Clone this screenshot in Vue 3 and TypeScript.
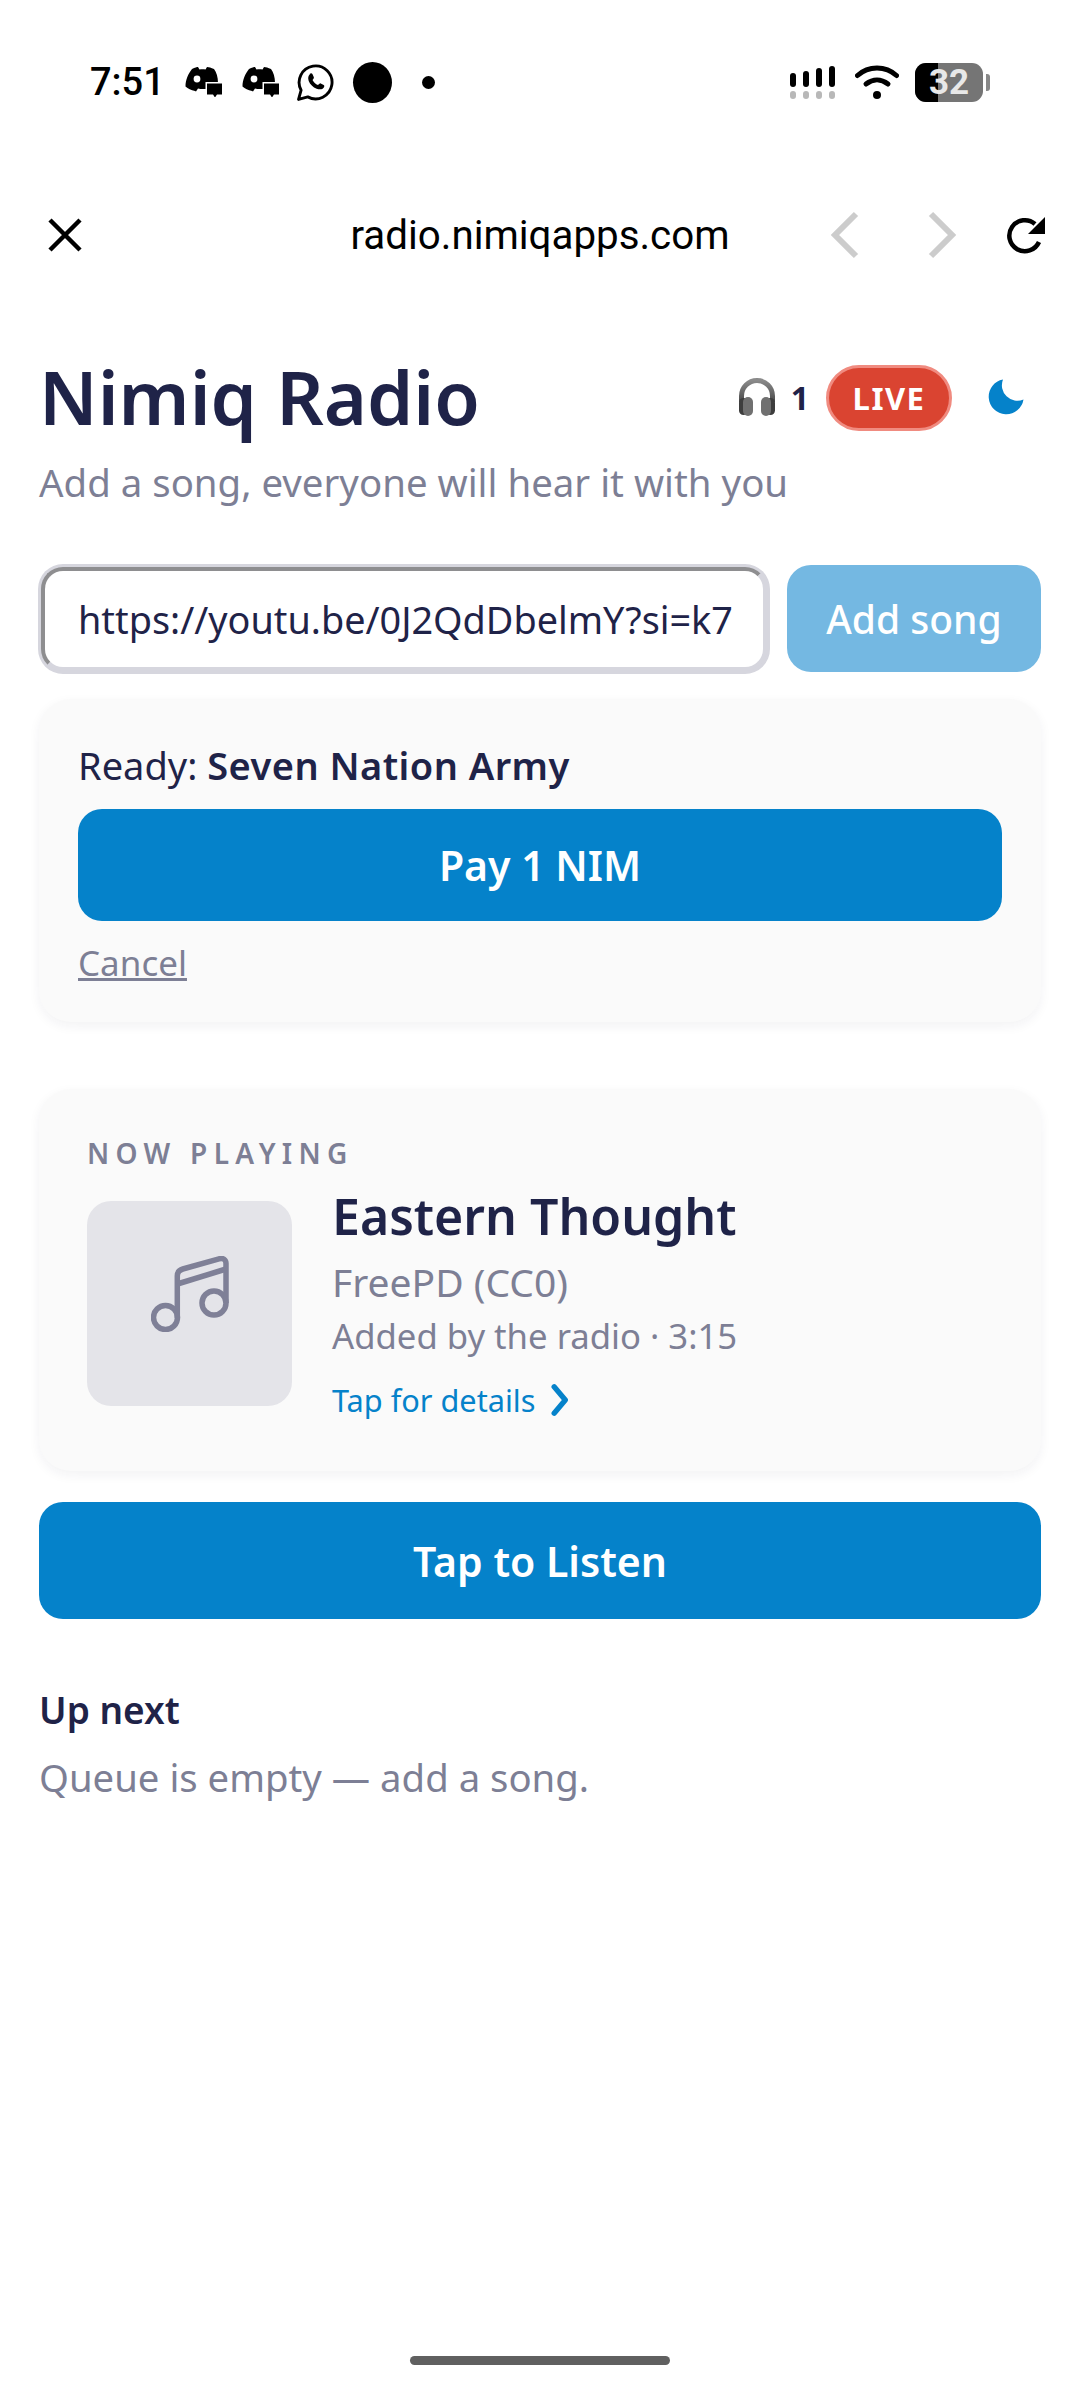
<script setup lang="ts">
const signal: number[] = [14, 16, 19, 21]
</script>

<template>
  <div class="screen">
    <div class="status">
      <div class="status-left">
        <span class="time">7:51</span>
        <svg class="discord" viewBox="0 0 37 30"><path d="M7 2C10 .5 12 0 13 0l1.500 2.500c2-.3 4-.3 6 0L22 0c2 0 4 .8 7 2 2.500 3.500 4 8 4 14v3l-7 3-2 2-1-2.500c-3 .8-7 .8-10 0L11 24.500l-1-.5C6 23 3 21.500 .5 19.500.5 13 3 7 7 2z" /><circle cx="12" cy="12" r="3.400" fill="#fff" /><path d="M22 16.500h15v11h-5l-2 3-2-3h-6z" stroke="#fff" stroke-width="3" paint-order="stroke" /></svg>
        <svg class="discord" viewBox="0 0 37 30"><path d="M7 2C10 .5 12 0 13 0l1.500 2.500c2-.3 4-.3 6 0L22 0c2 0 4 .8 7 2 2.500 3.500 4 8 4 14v3l-7 3-2 2-1-2.500c-3 .8-7 .8-10 0L11 24.500l-1-.5C6 23 3 21.500 .5 19.500.5 13 3 7 7 2z" /><circle cx="12" cy="12" r="3.400" fill="#fff" /><path d="M22 16.500h15v11h-5l-2 3-2-3h-6z" stroke="#fff" stroke-width="3" paint-order="stroke" /></svg>
        <svg class="wa" viewBox="0 0 36 36"><path d="M1.500 34.500l2.500-9A16 16 0 1 1 10.500 32z" fill="none" stroke="#000" stroke-width="2.800" stroke-linejoin="round" /><path d="M12.500 9.500c1-.8 2-.6 2.500.3l1.400 3c.3.700-.8 2-1.300 2.700 1 2.200 3 4 5.300 5 .8-.7 1.900-2 2.700-1.600l2.900 1.500c.8.500.7 1.500.1 2.400-1.200 2-4 2.300-7 1.200-3.500-1.300-6.500-4.300-7.700-7.500-1-2.800-.4-5.300 1.100-6.500z" /></svg>
        <span class="blob"></span>
        <span class="dot"></span>
      </div>
      <div class="status-right">
        <div class="signal">
          <div v-for="h in signal" :key="h" class="bar-col">
            <span class="bar" :style="{ height: h + 'px' }"></span>
            <span class="bar-dot"></span>
          </div>
        </div>
        <svg class="wifi" viewBox="0 0 44 34"><path d="M2.500 10.500c11-10 28-10 39 0" fill="none" stroke="#000" stroke-width="5" stroke-linecap="round" /><path d="M11 19c7-5.500 15-5.500 22 0" fill="none" stroke="#000" stroke-width="5" stroke-linecap="round" /><circle cx="22" cy="30" r="4" /></svg>
        <div class="battery"><span class="battery-fill"></span><span class="battery-num">32</span></div>
        <span class="battery-tip"></span>
      </div>
    </div>

    <div class="chrome">
      <svg class="close" viewBox="0 0 36 36"><path d="M3 3l30 30M33 3L3 33" fill="none" stroke="#000" stroke-width="4.500" /></svg>
      <span class="url">radio.nimiqapps.com</span>
      <svg class="nav nav-back" viewBox="0 0 30 48"><path d="M26 3L5 24l21 21" fill="none" stroke="#ccc" stroke-width="6" /></svg>
      <svg class="nav nav-fwd" viewBox="0 0 30 48"><path d="M4 3l21 21L4 45" fill="none" stroke="#ccc" stroke-width="6" /></svg>
      <svg class="reload" viewBox="0 0 40 40"><path d="M33 27A15.500 15.500 0 1 1 29 9" fill="none" stroke="#000" stroke-width="4.500" /><path d="M39 2v17H22z" /></svg>
    </div>

    <main class="page">
      <header class="head">
        <h1>Nimiq Radio</h1>
        <div class="head-right">
          <svg class="phones" viewBox="0 0 38 38">
            <defs>
              <linearGradient id="band" x1="0" y1="0" x2="0" y2="1"><stop offset="0" stop-color="#8a8a8a" /><stop offset="1" stop-color="#4a4a4a" /></linearGradient>
            </defs>
            <path d="M3.500 24v-6a15.500 15.500 0 0 1 31 0v6" fill="none" stroke="url(#band)" stroke-width="5" />
            <rect x="1" y="20" width="9" height="17" rx="4.500" fill="#3d3d3d" />
            <rect x="28" y="20" width="9" height="17" rx="4.500" fill="#3d3d3d" />
            <rect x="5" y="19" width="10" height="19" rx="5" fill="#707070" />
            <rect x="23" y="19" width="10" height="19" rx="5" fill="#707070" />
          </svg>
          <span class="count">1</span>
          <span class="live">LIVE</span>
          <svg class="moon" viewBox="0 0 36 36"><path d="M15 .5A17.500 17.500 0 1 0 35.500 20.500 15.500 15.500 0 0 1 15 .5z" fill="#0582ca" /></svg>
        </div>
      </header>
      <p class="sub">Add a song, everyone will hear it with you</p>

      <div class="form">
        <div class="input">https://youtu.be/0J2QdDbelmY?si=k7</div>
        <button class="add">Add song</button>
      </div>

      <section class="card ready">
        <p class="ready-line">Ready: <strong>Seven Nation Army</strong></p>
        <button class="primary pay">Pay 1 NIM</button>
        <a class="cancel">Cancel</a>
      </section>

      <section class="card playing">
        <div class="eyebrow">NOW PLAYING</div>
        <div class="track">
          <div class="art">
            <svg viewBox="0 0 78 76"><g fill="none" stroke="#7f8097" stroke-width="5.500" stroke-linejoin="round"><circle cx="14.500" cy="61.500" r="12" /><circle cx="63" cy="47" r="12" /><path d="M26.300 62V20c0-4 2-6 5.500-7L68 2.800c4-1.200 7 .7 7 4.700V47" /><path d="M26.300 28L75 13" /></g></svg>
          </div>
          <div class="info">
            <h2>Eastern Thought</h2>
            <div class="artist">FreePD (CC0)</div>
            <div class="meta">Added by the radio · 3:15</div>
            <div class="details">Tap for details
              <svg viewBox="0 0 18 32"><path d="M3.500 3.500L14 16 3.500 28.500" fill="none" stroke="#0582ca" stroke-width="5" stroke-linecap="round" stroke-linejoin="round" /></svg>
            </div>
          </div>
        </div>
      </section>

      <button class="primary listen">Tap to Listen</button>

      <h3>Up next</h3>
      <p class="empty">Queue is empty — add a song.</p>
    </main>

    <div class="home"></div>
  </div>
</template>

<style>
html, body { margin: 0; background: #fff; }
</style>

<style scoped>
.screen { width: 1080px; height: 2404px; position: relative; background: #fff; overflow: hidden; font-family: "Noto Sans", "Open Sans", sans-serif; color: #1f2348; }

.status { height: 160px; box-sizing: border-box; padding: 62px 90px 0 90px; display: flex; justify-content: space-between; align-items: flex-start; font-family: Roboto, sans-serif; }
.status-left { display: flex; align-items: center; height: 40px; }
.time { font-size: 38px; font-weight: 500; color: #000; width: 95px; }
.discord { width: 37px; height: 30px; margin-right: 20px; }
.wa { width: 37px; height: 37px; margin-right: 19px; margin-left: -2px; }
.blob { width: 39px; height: 41px; border-radius: 50%; background: #000; margin-right: 30px; }
.dot { width: 13px; height: 13px; border-radius: 50%; background: #000; }
.status-right { display: flex; align-items: center; height: 40px; }
.signal { display: flex; gap: 7px; margin-right: 20px; align-items: flex-end; }
.bar-col { display: flex; flex-direction: column; align-items: center; gap: 4px; justify-content: flex-end; height: 34px; }
.bar { width: 6px; border-radius: 3px; background: #000; }
.bar-dot { width: 6px; height: 8px; border-radius: 3px; background: #b8b8b8; }
.wifi { width: 44px; height: 34px; margin-right: 16px; }
.battery { width: 68px; height: 39px; border-radius: 11px; background: #757575; position: relative; overflow: hidden; display: flex; align-items: center; justify-content: center; }
.battery-fill { position: absolute; left: 0; top: 0; bottom: 0; width: 23px; background: #000; }
.battery-num { position: relative; color: #e8e8e8; font-size: 35px; font-weight: 700; }
.battery-tip { width: 4px; height: 17px; background: #888; border-radius: 0 3px 3px 0; margin-left: 3px; }

.chrome { height: 150px; box-sizing: border-box; position: relative; display: flex; align-items: center; padding-left: 47px; }
.close { width: 36px; height: 36px; }
.url { position: absolute; left: 0; right: 0; text-align: center; font-family: Roboto, sans-serif; font-size: 40.300px; color: #000; }
.nav { position: absolute; width: 30px; height: 48px; }
.nav-back { left: 830px; }
.nav-fwd { left: 927px; }
.reload { position: absolute; left: 1006px; width: 40px; height: 40px; }

.page { padding: 37px 39px 0 39px; }
.head { display: flex; justify-content: space-between; align-items: center; height: 100px; }
h1 { margin: 0; font-size: 74px; font-weight: 600; line-height: 100px; }
.head-right { display: flex; align-items: center; }
.phones { width: 38px; height: 38px; margin-right: 15px; }
.count { font-size: 32px; font-weight: 700; margin-right: 17px; }
.live { width: 126px; height: 66px; box-sizing: border-box; margin-top: 2px; border: 3px solid #f08b80; border-radius: 33px; background: #da4431; color: #fff; font-size: 31px; font-weight: 700; letter-spacing: 1.500px; display: flex; align-items: center; justify-content: center; }
.moon { width: 36px; height: 36px; margin: 0 17px 0 36px; }
.sub { margin: 12px 0 0; font-size: 38.400px; line-height: 46px; color: #7d7f95; }

.form { display: flex; gap: 20px; margin-top: 60px; }
.input { width: 726px; height: 104px; box-sizing: border-box; margin: 2px 0 0 2px; border: 4px solid; border-color: #8e8e90 #d6d6de #d6d6de #8e8e90; box-shadow: 0 0 0 3px #d6d6de; border-radius: 22px; background: #fff; display: flex; align-items: center; padding-left: 33px; font-size: 37.800px; overflow: hidden; white-space: nowrap; }
.add { flex: 1; height: 107px; border: 0; border-radius: 24px; background: #74b8e2; color: #fff; font: 500 39px "Noto Sans", sans-serif; }

.card { background: #fafafa; border-radius: 32px; box-shadow: 0 4px 12px rgba(31, 35, 72, 0.06); }
.ready { margin-top: 27px; height: 323px; box-sizing: border-box; padding: 42px 39px 0; }
.ready-line { margin: 0; font-size: 38px; line-height: 48px; }
.ready-line strong { font-weight: 600; letter-spacing: 0.450px; }
.primary { display: block; width: 100%; border: 0; background: #0582ca; color: #fff; font-family: "Noto Sans", sans-serif; font-weight: 600; font-size: 41px; }
.pay { height: 112px; border-radius: 24px; margin-top: 20px; }
.cancel { display: inline-block; margin-top: 19px; font-size: 35px; line-height: 46px; color: #7d7f95; text-decoration: underline; }

.playing { margin-top: 67px; height: 382px; box-sizing: border-box; padding: 48px 48px 0; }
.eyebrow { font-size: 28px; line-height: 32px; font-weight: 600; letter-spacing: 6.300px; color: #7d7f95; }
.track { display: flex; gap: 40px; margin-top: 32px; }
.art { width: 205px; height: 205px; border-radius: 24px; background: #e4e4e9; display: flex; align-items: center; justify-content: center; flex: none; }
.art svg { width: 78px; height: 76px; margin-bottom: 20px; }
.info { margin-top: -16px; }
h2 { margin: 0; font-size: 50px; line-height: 62px; font-weight: 600; }
.artist { font-size: 39px; line-height: 50px; margin-top: 10px; color: #7d7f95; }
.meta { font-size: 34.700px; line-height: 44px; margin-top: 7px; color: #7d7f95; }
.details { display: flex; align-items: center; gap: 15px; font-size: 30.700px; line-height: 44px; margin-top: 20px; color: #0582ca; }
.details svg { width: 20px; height: 34px; }

.listen { height: 117px; border-radius: 24px; margin-top: 31px; }
h3 { margin: 68px 0 0; font-size: 37px; line-height: 46px; font-weight: 600; }
.empty { margin: 21px 0 0; font-size: 38.300px; line-height: 46px; color: #7d7f95; }

.home { position: absolute; left: 410px; top: 2356px; width: 260px; height: 9px; border-radius: 5px; background: #606060; }
</style>
